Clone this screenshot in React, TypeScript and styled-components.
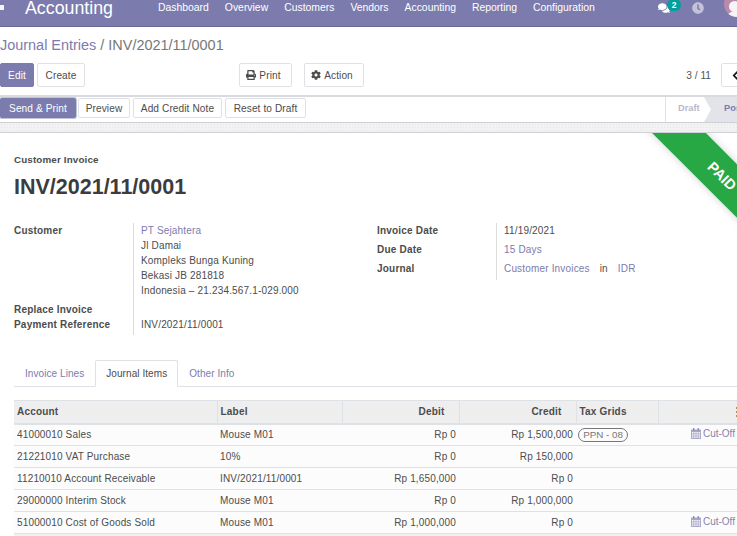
import { ReactNode } from 'react'
import styled, { createGlobalStyle } from 'styled-components'
import { FaChevronLeft, FaClock, FaCog, FaComments, FaPrint } from 'react-icons/fa'

const Global = createGlobalStyle`
  html, body { margin: 0; padding: 0; background: #fff; }
  body { font-family: "Liberation Sans", Arial, sans-serif; font-size: 10.4px; color: #4c4c4c; }
  * { box-sizing: border-box; }
`

const Page = styled.div`
  width: 737px;
  height: 536px;
  overflow: hidden;
  position: relative;
  display: flex;
  flex-direction: column;
`

const Navbar = styled.header`
  height: 27px;
  flex: none;
  background: #7c7bad;
  border-bottom: 1px solid #6a6a96;
  color: #fff;
  display: flex;
  align-items: flex-start;
  position: relative;
`

const AppsDot = styled.span`
  width: 4px;
  height: 5px;
  margin-top: 5px;
  background: #f4f4f8;
  flex: none;
`

const Brand = styled.span`
  margin-left: 21px;
  width: 133px;
  flex: none;
  font-size: 17.8px;
  line-height: 17px;
`

const NavMenu = styled.nav`
  display: flex;
  gap: 16px;
  line-height: 15px;
  font-size: 10.4px;
`

const NavTray = styled.div`
  margin-left: auto;
  display: flex;
  align-items: flex-start;
  padding-top: 1px;
`

const Chat = styled.span`
  position: relative;
  width: 13px;
  height: 13px;
  margin-top: 1px;
  font-size: 12px;
  svg { display: block; }
`

const Badge = styled.span`
  position: absolute;
  left: 9px;
  top: -3px;
  width: 14px;
  height: 12px;
  border-radius: 6px;
  background: #00a09d;
  font-size: 8.5px;
  font-weight: bold;
  line-height: 12px;
  text-align: center;
`

const Clock = styled.span`
  margin-left: 21px;
  margin-top: 1px;
  font-size: 12px;
  color: #c3c2d8;
  line-height: 0;
`

const Avatar = styled.span`
  width: 26px;
  height: 26px;
  margin-left: 20px;
  margin-right: -13px;
  margin-top: -10px;
  border-radius: 50%;
  background: #b98aa9;
  position: relative;
  overflow: hidden;
  flex: none;
  &::before {
    content: '';
    position: absolute;
    left: 5px;
    top: 10px;
    width: 11px;
    height: 11px;
    border-radius: 50%;
    background: #f7f3f6;
  }
  &::after {
    content: '';
    position: absolute;
    left: 3px;
    top: 20px;
    width: 18px;
    height: 12px;
    border-radius: 50%;
    background: #f7f3f6;
  }
`

const Control = styled.section`
  flex: none;
  height: 68px;
  display: flex;
  flex-direction: column;
  padding-top: 10px;
`

const Breadcrumb = styled.div`
  font-size: 14.45px;
  line-height: 17px;
  color: #7c7bad;
  span { color: #777; }
`

const ControlRow = styled.div`
  margin-top: 9px;
  display: flex;
  align-items: center;
  height: 24px;
`

const Group = styled.div<{ $left?: number }>`
  display: flex;
  gap: 3px;
  margin-left: ${(p) => p.$left ?? 0}px;
`

const Button = styled.button<{ $primary?: boolean; $w?: number; $h?: number }>`
  width: ${(p) => p.$w ?? 50}px;
  height: ${(p) => p.$h ?? 24}px;
  padding: 0;
  border: 1px solid ${(p) => (p.$primary ? '#7c7bad' : '#dee2e6')};
  border-radius: 2px;
  background: ${(p) => (p.$primary ? '#7c7bad' : '#fff')};
  color: ${(p) => (p.$primary ? '#fff' : '#4c4c4c')};
  font: 400 10.1px "Liberation Sans", Arial, sans-serif;
  letter-spacing: 0.1px;
  display: flex;
  align-items: center;
  justify-content: center;
  gap: 3px;
  flex: none;
  svg { font-size: 10px; }
`

const IconButton = styled(Button)`
  padding-right: 4px;
`

const Pager = styled.span`
  margin-left: auto;
  font-size: 10.2px;
  color: #555;
  margin-right: 10px;
`

const PrevButton = styled(Button)`
  width: 24px;
  margin-right: -8px;
  justify-content: flex-start;
  padding-left: 8px;
  color: #111;
  svg { font-size: 11px; }
`

const StatusBar = styled.div`
  flex: none;
  height: 28px;
  border-top: 2px solid #d9d9de;
  border-bottom: 1px solid #cfcfd8;
  display: flex;
  align-items: flex-start;
  background: #fff;
`

const StatusActions = styled.div`
  display: flex;
  gap: 3px;
  align-items: center;
  padding-top: 1px;
`

const SendButton = styled(Button)`
  box-shadow: 0 0 0 1px #c3c3d8;
  margin-right: -1px;
`

const Stages = styled.div`
  margin-left: auto;
  height: 25px;
  width: 72px;
  border-left: 1px solid #e2e2e6;
  display: flex;
  overflow: hidden;
  flex: none;
`

const Stage = styled.span<{ $current?: boolean }>`
  font-weight: bold;
  font-size: 9.3px;
  line-height: 23px;
  flex: none;
  color: ${(p) => (p.$current ? '#7c7bad' : '#b9b9c8')};
  background: ${(p) => (p.$current ? '#e2e4ea' : '#fff')};
  padding-left: ${(p) => (p.$current ? '20px' : '12px')};
  width: ${(p) => (p.$current ? '60px' : '39px')};
  clip-path: ${(p) =>
    p.$current ? 'polygon(0 0, 100% 0, 100% 100%, 0 100%, 7px 50%)' : 'none'};
  margin-left: ${(p) => (p.$current ? '-1px' : '0')};
`

const Dots = styled.div`
  flex: none;
  height: 10px;
  background: #f2f2f2;
  background-image: radial-gradient(#e6e6e6 0.6px, transparent 0.7px);
  background-size: 3px 3px;
  border-bottom: 1px solid #cfcfd8;
`

const Sheet = styled.main`
  flex: 1;
  position: relative;
  padding: 21px 0 0 14px;
  min-height: 0;
  display: flex;
  flex-direction: column;
`

const RibbonClip = styled.div`
  position: absolute;
  inset: 0;
  overflow: hidden;
  pointer-events: none;
`

const Ribbon = styled.div`
  position: absolute;
  top: 24px;
  left: 622px;
  width: 200px;
  height: 38px;
  background: #28a745;
  color: #fff;
  font-size: 14.5px;
  font-weight: bold;
  line-height: 38px;
  text-align: center;
  transform: rotate(45deg);
  box-shadow: 0 0 8px rgba(0, 0, 0, 0.18);
`

const Kind = styled.div`
  font-weight: bold;
  font-size: 9.8px;
  line-height: 12px;
  letter-spacing: 0.15px;
`

const Title = styled.h1`
  margin: 8px 0 0;
  font-size: 21.5px;
  line-height: 26px;
  font-weight: bold;
  color: #3c3c3c;
`

const Fields = styled.div`
  margin-top: 23px;
  display: flex;
  height: 112px;
  flex: none;
`

const LeftFields = styled.div`
  width: 363px;
  flex: none;
  display: grid;
  grid-template-columns: 119px 1fr;
  grid-template-rows: 75px 19px 18px;
`

const RightFields = styled.div`
  display: grid;
  grid-template-columns: 119px 1fr;
  grid-template-rows: 19px 19px 19px;
  align-content: start;
`

const Label = styled.div`
  font-weight: bold;
  font-size: 10px;
  letter-spacing: 0.2px;
  line-height: 15px;
  color: #4c4c4c;
`

const LabelCell = styled(Label)<{ $bottom?: boolean }>`
  align-self: ${(p) => (p.$bottom ? 'end' : 'start')};
`

const Value = styled.div`
  border-left: 1px solid #dcdcdc;
  padding-left: 7px;
  line-height: 15px;
  font-size: 10px;
  letter-spacing: 0.17px;
  white-space: nowrap;
`

const Link = styled.span`
  color: #7c7bad;
`

const JournalSep = styled.span`
  margin: 0 10px;
`

const Tabs = styled.div`
  margin-top: 25px;
  height: 27px;
  flex: none;
  border-bottom: 1px solid #dee2e6;
  display: flex;
`

const Tab = styled.div<{ $active?: boolean }>`
  height: 27px;
  padding: 0 10px;
  flex: none;
  font-size: 10px;
  letter-spacing: 0.07px;
  line-height: 26px;
  border: 1px solid ${(p) => (p.$active ? '#dee2e6' : 'transparent')};
  border-bottom: 1px solid ${(p) => (p.$active ? '#fff' : 'transparent')};
  border-radius: 2px 2px 0 0;
  color: ${(p) => (p.$active ? '#4c4c4c' : '#7c7bad')};
`

const Table = styled.table`
  margin-top: 13px;
  width: 723px;
  flex: none;
  table-layout: fixed;
  border-collapse: collapse;
  font-size: 10px;
  letter-spacing: 0.15px;
`

const Head = styled.th<{ $right?: boolean }>`
  height: 23px;
  background: #eeeeee;
  border-top: 1px solid #dee2e6;
  border-bottom: 2px solid #dee2e6;
  border-right: 1px solid #dee2e6;
  padding: 0 ${(p) => (p.$right ? '14px' : '3px')} 0 3px;
  text-align: ${(p) => (p.$right ? 'right' : 'left')};
  font-weight: bold;
  color: #4c4c4c;
  letter-spacing: 0.2px;
`

const Cell = styled.td<{ $right?: boolean }>`
  height: 22px;
  padding: 0 3px;
  border-bottom: 1px solid #dee2e6;
  background: #fcfcfc;
  white-space: nowrap;
  overflow: hidden;
  text-align: ${(p) => (p.$right ? 'right' : 'left')};
`

const LastHead = styled(Head)`
  border-right: none;
  padding: 0;
  text-align: right;
  overflow: hidden;
`

const OptionalDots = styled.span`
  display: inline-block;
  vertical-align: middle;
  width: 3px;
  height: 10px;
  margin-right: -2px;
  background: repeating-linear-gradient(#c08a3e 0 2px, transparent 2px 4px);
`

const Tag = styled.span`
  display: inline-block;
  height: 14px;
  width: 50px;
  margin-left: -1px;
  border: 1.5px solid #777;
  border-radius: 7px;
  font-size: 9.8px;
  letter-spacing: 0;
  text-align: center;
  line-height: 11px;
  color: #777;
`

const CutOffCell = styled.span`
  color: #8583b0;
  display: inline-flex;
  align-items: center;
  gap: 2px;
  letter-spacing: 0;
  margin-right: -1px;
  svg { display: block; }
`

const Footer = styled.div`
  flex: 1;
  width: 723px;
  background: #f0f0f0;
`

const Calendar = () => (
  <svg width="10" height="11" viewBox="0 0 10 11">
    <rect x="0" y="1.5" width="10" height="9.5" fill="#a9a8c9" />
    <rect x="2" y="0" width="1.4" height="3" fill="#8f8eb8" />
    <rect x="6.6" y="0" width="1.4" height="3" fill="#8f8eb8" />
    <g fill="#fcfcfc">
      {[1, 3.2, 5.4, 7.6].map((x) =>
        [4, 6.2, 8.4].map((y) => (
          <rect key={`${x}-${y}`} x={x} y={y} width="1.4" height="1.4" />
        ))
      )}
    </g>
  </svg>
)

const CutOff = () => (
  <CutOffCell>
    <Calendar />
    Cut-Off
  </CutOffCell>
)

type Line = {
  account: string
  label: string
  debit: string
  credit: string
  grid?: ReactNode
  cut?: boolean
}

const lines: Line[] = [
  { account: '41000010 Sales', label: 'Mouse M01', debit: 'Rp 0', credit: 'Rp 1,500,000', grid: <Tag>PPN - 08</Tag>, cut: true },
  { account: '21221010 VAT Purchase', label: '10%', debit: 'Rp 0', credit: 'Rp 150,000' },
  { account: '11210010 Account Receivable', label: 'INV/2021/11/0001', debit: 'Rp 1,650,000', credit: 'Rp 0' },
  { account: '29000000 Interim Stock', label: 'Mouse M01', debit: 'Rp 0', credit: 'Rp 1,000,000' },
  { account: '51000010 Cost of Goods Sold', label: 'Mouse M01', debit: 'Rp 1,000,000', credit: 'Rp 0', cut: true },
]

const menu = ['Dashboard', 'Overview', 'Customers', 'Vendors', 'Accounting', 'Reporting', 'Configuration']

export default function App() {
  return (
    <Page>
      <Global />
      <Navbar>
        <AppsDot />
        <Brand>Accounting</Brand>
        <NavMenu>
          {menu.map((m) => (
            <span key={m}>{m}</span>
          ))}
        </NavMenu>
        <NavTray>
          <Chat>
            <FaComments />
            <Badge>2</Badge>
          </Chat>
          <Clock>
            <FaClock />
          </Clock>
          <Avatar />
        </NavTray>
      </Navbar>

      <Control>
        <Breadcrumb>
          Journal Entries <span>/ INV/2021/11/0001</span>
        </Breadcrumb>
        <ControlRow>
          <Group>
            <Button $primary $w={34}>Edit</Button>
            <Button $w={48}>Create</Button>
          </Group>
          <Group $left={154}>
            <IconButton $w={53}>
              <FaPrint /> Print
            </IconButton>
          </Group>
          <Group $left={12}>
            <IconButton $w={60}>
              <FaCog /> Action
            </IconButton>
          </Group>
          <Pager>3 / 11</Pager>
          <PrevButton>
            <FaChevronLeft />
          </PrevButton>
        </ControlRow>
      </Control>

      <StatusBar>
        <StatusActions>
          <SendButton $primary $w={76} $h={20}>Send &amp; Print</SendButton>
          <Button $w={52} $h={20}>Preview</Button>
          <Button $w={89} $h={20}>Add Credit Note</Button>
          <Button $w={81} $h={20}>Reset to Draft</Button>
        </StatusActions>
        <Stages>
          <Stage>Draft</Stage>
          <Stage $current>Posted</Stage>
        </Stages>
      </StatusBar>
      <Dots />

      <Sheet>
        <RibbonClip>
          <Ribbon>PAID</Ribbon>
        </RibbonClip>
        <Kind>Customer Invoice</Kind>
        <Title>INV/2021/11/0001</Title>

        <Fields>
          <LeftFields>
            <LabelCell>Customer</LabelCell>
            <Value>
              <Link>PT Sejahtera</Link>
              <div>Jl Damai</div>
              <div>Kompleks Bunga Kuning</div>
              <div>Bekasi JB 281818</div>
              <div>Indonesia – 21.234.567.1-029.000</div>
            </Value>
            <LabelCell $bottom>Replace Invoice</LabelCell>
            <Value />
            <LabelCell>Payment Reference</LabelCell>
            <Value>INV/2021/11/0001</Value>
          </LeftFields>
          <RightFields>
            <Label>Invoice Date</Label>
            <Value>11/19/2021</Value>
            <Label>Due Date</Label>
            <Value><Link>15 Days</Link></Value>
            <Label>Journal</Label>
            <Value>
              <Link>Customer Invoices</Link>
              <JournalSep>in</JournalSep>
              <Link>IDR</Link>
            </Value>
          </RightFields>
        </Fields>

        <Tabs>
          <Tab>Invoice Lines</Tab>
          <Tab $active>Journal Items</Tab>
          <Tab>Other Info</Tab>
        </Tabs>

        <Table>
          <colgroup>
            <col style={{ width: 203 }} />
            <col style={{ width: 125 }} />
            <col style={{ width: 117 }} />
            <col style={{ width: 117 }} />
            <col style={{ width: 82 }} />
            <col style={{ width: 79 }} />
          </colgroup>
          <thead>
            <tr>
              <Head>Account</Head>
              <Head>Label</Head>
              <Head $right>Debit</Head>
              <Head $right>Credit</Head>
              <Head>Tax Grids</Head>
              <LastHead><OptionalDots /></LastHead>
            </tr>
          </thead>
          <tbody>
            {lines.map((l) => (
              <tr key={l.account}>
                <Cell>{l.account}</Cell>
                <Cell>{l.label}</Cell>
                <Cell $right>{l.debit}</Cell>
                <Cell $right>{l.credit}</Cell>
                <Cell>{l.grid}</Cell>
                <Cell $right>{l.cut && <CutOff />}</Cell>
              </tr>
            ))}
          </tbody>
        </Table>
        <Footer />
      </Sheet>
    </Page>
  )
}
